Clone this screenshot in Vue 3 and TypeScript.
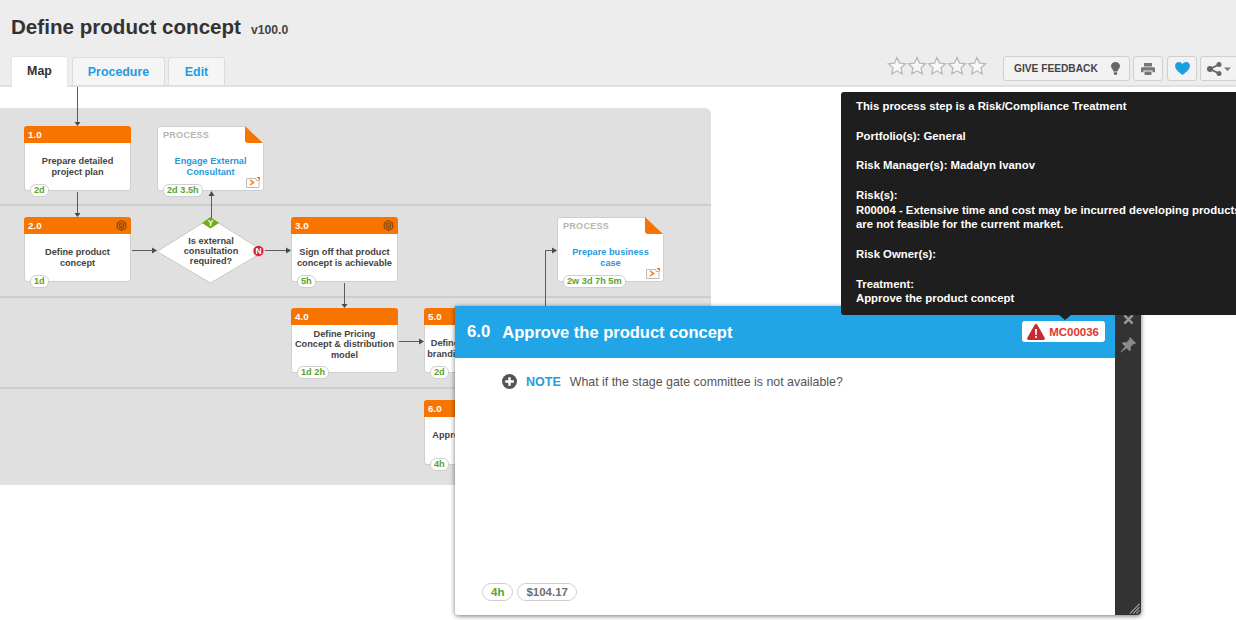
<template>
  <div class="page">
    <header class="head">
      <div class="title-row">
        <h1>Define product concept</h1>
        <span class="version">v100.0</span>
      </div>
      <div class="tab-row">
        <nav class="tabs">
          <a class="tab active">Map</a>
          <a class="tab procedure">Procedure</a>
          <a class="tab edit">Edit</a>
        </nav>
        <div class="actions">
          <div class="stars">
            <svg v-for="s in 5" :key="s" width="20" height="19" viewBox="0 0 20 19">
              <path d="M10 1.500l2.500 5.600 6 .7-4.500 4.100 1.300 6L10 14.900l-5.300 3 1.300-6L1.500 7.800l6-.7z" fill="#f7f7f7" stroke="#b9b9b9" stroke-width="1.300" />
            </svg>
          </div>
          <button class="btn feedback">
            <span>GIVE FEEDBACK</span>
            <svg width="9" height="13" viewBox="0 0 9 13">
              <path d="M4.500 0C7 0 9 1.900 9 4.300 9 6.200 7 7.200 6.500 9.500h-4C2 7.200 0 6.200 0 4.300 0 1.900 2 0 4.500 0z" fill="#666" />
              <path d="M2.800 10.200h3.400v1.300L5.300 13H3.700l-.9-1.500z" fill="#666" />
            </svg>
          </button>
          <button class="btn square print">
            <svg width="14" height="12" viewBox="0 0 14 12">
              <path d="M3 0h8v3.500H3z" fill="#777" />
              <path d="M1.300 4.200h11.400A1.300 1.300 0 0 1 14 5.500v3.700h-2.500V7.500h-9v1.700H0V5.500a1.300 1.300 0 0 1 1.300-1.300z" fill="#777" />
              <path d="M3.500 8.500h7V12h-7z" fill="#777" />
            </svg>
          </button>
          <button class="btn square">
            <svg width="15" height="13" viewBox="0 0 16 14">
              <path d="M8 14C3 10 0 7.500 0 4.200 0 1.800 1.800 0 4.100 0 5.700 0 7.200.8 8 2.100 8.800.8 10.300 0 11.900 0 14.200 0 16 1.800 16 4.200 16 7.500 13 10 8 14z" fill="#1c9fe2" />
            </svg>
          </button>
          <button class="btn share">
            <svg width="25" height="14" viewBox="0 0 25 14">
              <path d="M12 2.500L3 7l9 4.500" fill="none" stroke="#666" stroke-width="1.800" />
              <circle cx="3" cy="7" r="3" fill="#666" />
              <circle cx="12" cy="2.500" r="2.500" fill="#666" />
              <circle cx="12" cy="11.500" r="2.500" fill="#666" />
              <path d="M17 5.500h7L20.500 9z" fill="#777" />
            </svg>
          </button>
        </div>
      </div>
    </header>

    <main class="stage">
      <div class="lanes">
        <div class="lane" style="height: 96px"></div>
        <div class="lane" style="height: 90px"></div>
        <div class="lane" style="height: 89px"></div>
        <div class="lane" style="height: 96px"></div>
      </div>

      <svg class="wires" width="711" height="400" viewBox="0 0 711 400">
        <path v-for="w in wires" :key="w" :d="w" fill="none" stroke="#5c5c5c" stroke-width="1" />
        <path v-for="a in arrows" :key="a" :d="a" fill="#4a4a4a" />
      </svg>

      <div
        v-for="n in steps"
        :key="n.num + n.label"
        class="step"
        :style="{ left: n.x + 'px', top: n.y + 'px' }"
      >
        <div class="step-bar">
          <span>{{ n.num }}</span>
          <svg v-if="n.cog" width="11" height="11" viewBox="0 0 11 11">
            <path d="M5.500.8l4.200 2.400v4.600L5.500 10.200 1.300 7.800V3.200z" fill="none" stroke="#8f4c12" stroke-width="1.300" />
            <path d="M5.500 3.200l2.100 1.200v2.200L5.500 7.800 3.400 6.600V4.400z" fill="none" stroke="#8f4c12" stroke-width="1.100" />
            <path d="M1.300 3.200l4.200 2.300 4.200-2.300M5.500 5.500v4.700" fill="none" stroke="#8f4c12" stroke-width=".8" />
          </svg>
        </div>
        <div class="step-text" :class="{ tight: n.tight }">{{ n.label }}</div>
        <span class="time">{{ n.time }}</span>
      </div>

      <div
        v-for="p in processes"
        :key="p.label"
        class="process"
        :style="{ left: p.x + 'px', top: p.y + 'px' }"
      >
        <svg class="fold" width="19" height="18" viewBox="0 0 19 18">
          <path d="M0 0h19v18z" fill="#e0e0e0" />
          <path d="M0 0l18 17H3a3 3 0 0 1-3-3z" fill="#f77400" />
        </svg>
        <div class="process-tag">PROCESS</div>
        <div class="process-text">{{ p.label }}</div>
        <svg class="jump" width="14" height="11" viewBox="0 0 14 11">
          <path d="M.5 1.500h9.500v2h3v7H.5z" fill="#fff" stroke="#bbb" />
          <path d="M4 3l3.500 2.500L4 8" fill="none" stroke="#f77400" stroke-width="1.500" />
          <path d="M10.500 0H14v3.500z" fill="#f77400" />
        </svg>
        <span class="time">{{ p.time }}</span>
      </div>

      <div class="gate">
        <svg width="110" height="68" viewBox="0 0 110 68">
          <path d="M54.500 1L108 34.500 54.500 66 1 34.500z" fill="#fff" stroke="#c8c8c8" />
          <path d="M54.500 0L63 6l-8.500 5.500L46 6z" fill="#6fae10" />
          <text x="54.500" y="9" text-anchor="middle" class="gate-flag">Y</text>
          <circle cx="102.500" cy="34" r="5.500" fill="#cf2035" stroke="#f3c7cc" />
          <text x="102.500" y="37" text-anchor="middle" class="gate-flag">N</text>
        </svg>
        <div class="gate-text">Is external<br />consultation<br />required?</div>
      </div>
    </main>

    <section class="popup">
      <div class="popup-main">
        <div class="popup-head">
          <span class="popup-num">6.0</span>
          <span class="popup-title">Approve the product concept</span>
          <span class="risk">
            <svg width="18" height="16" viewBox="0 0 18 16">
              <path d="M9 0c.6 0 1 .3 1.300.8l7.400 13c.5 1-.1 2.200-1.200 2.200H1.500C.4 16-.2 14.800.3 13.800l7.400-13C8 .3 8.400 0 9 0z" fill="#c62a33" />
              <path d="M8 5h2l-.3 6H8.300z" fill="#fff" />
              <circle cx="9" cy="13" r="1.100" fill="#fff" />
            </svg>
            MC00036
          </span>
        </div>
        <div class="popup-body">
          <div class="note">
            <svg width="15" height="15" viewBox="0 0 15 15">
              <circle cx="7.500" cy="7.500" r="7.500" fill="#555" />
              <path d="M6.300 3.200h2.400v3.100h3.100v2.400H8.700v3.100H6.300V8.700H3.200V6.300h3.100z" fill="#fff" />
            </svg>
            <b>NOTE</b>
            <span>What if the stage gate committee is not available?</span>
          </div>
          <div class="chips">
            <span class="chip green">4h</span>
            <span class="chip">$104.17</span>
          </div>
        </div>
      </div>
      <aside class="popup-side">
        <svg width="11" height="11" viewBox="0 0 12 12">
          <path d="M1.500 1.500l9 9M10.500 1.500l-9 9" stroke="#999" stroke-width="2.600" />
        </svg>
        <svg class="pin" width="16" height="16" viewBox="0 0 16 16">
          <path d="M10 0l6 6-1.200 1.200-1-.4-3.200 3.200.3 3-1.300 1.300-3-3L1 15.500.5 15 5 9.400l-3-3L3.300 5.100l3 .3 3.200-3.200-.4-1z" fill="#8a8a8a" />
        </svg>
        <svg class="grip" width="11" height="11" viewBox="0 0 12 12">
          <path d="M11.500 1L1 11.500M11.500 4.500L4.500 11.500M11.500 8L8 11.500" stroke="#a5a5a5" stroke-width="1.200" />
        </svg>
      </aside>
    </section>

    <div class="tip">
      <p>This process step is a Risk/Compliance Treatment</p>
      <p>Portfolio(s): General</p>
      <p>Risk Manager(s): Madalyn Ivanov</p>
      <p>Risk(s):<br />R00004 - Extensive time and cost may be incurred developing products that<br />are not feasible for the current market.</p>
      <p>Risk Owner(s):</p>
      <p>Treatment:<br />Approve the product concept</p>
      <i class="tip-arrow"></i>
    </div>
  </div>
</template>

<script setup lang="ts">
interface Step {
  num: string;
  label: string;
  time: string;
  x: number;
  y: number;
  cog?: boolean;
  tight?: boolean;
}

interface ProcessLink {
  label: string;
  time: string;
  x: number;
  y: number;
}

const steps: Step[] = [
  { num: '1.0', label: 'Prepare detailed\nproject plan', time: '2d', x: 24, y: 39 },
  { num: '2.0', label: 'Define product\nconcept', time: '1d', x: 24, y: 130, cog: true },
  { num: '3.0', label: 'Sign off that product\nconcept is achievable', time: '5h', x: 291, y: 130, cog: true },
  { num: '4.0', label: 'Define Pricing\nConcept & distribution\nmodel', time: '1d 2h', x: 291, y: 221, tight: true },
  { num: '5.0', label: 'Define marketing and\nbranding & positioning', time: '2d', x: 424, y: 221 },
  { num: '6.0', label: 'Approve the product\nconcept', time: '4h', x: 424, y: 313 },
];

const processes: ProcessLink[] = [
  { label: 'Engage External\nConsultant', time: '2d 3.5h', x: 157, y: 39 },
  { label: 'Prepare business\ncase', time: '2w 3d 7h 5m', x: 557, y: 130 },
];

const wires = [
  'M77.500 0V36',
  'M77.500 105V127',
  'M132 163.500H152',
  'M211.500 134V108',
  'M265 163.500H286',
  'M344.500 196V218',
  'M399 254.500H419',
  'M545.500 222V163.500H552',
];

const arrows = [
  'M74.500 35h6l-3 4z',
  'M74.500 126h6l-3 4z',
  'M152 160.500v6l5-3z',
  'M208.500 109h6l-3-5z',
  'M286 160.500v6l5-3z',
  'M341.500 217h6l-3 4z',
  'M419 251.500v6l5-3z',
  'M552 160.500v6l5-3z',
];
</script>

<style>
html,
body {
  margin: 0;
  overflow: hidden;
  background: #fff;
}
</style>

<style scoped>
.page {
  position: relative;
  width: 1236px;
  height: 620px;
  overflow: hidden;
  font-family: "Liberation Sans", Arial, sans-serif;
  color: #333;
}

.head {
  height: 85px;
  background: #ededed;
  border-bottom: 2px solid #e0e0e0;
}

.title-row {
  display: flex;
  align-items: baseline;
  gap: 10px;
  padding: 14px 0 0 11px;
  height: 29px;
}

h1 {
  margin: 0;
  font-size: 20.600px;
  line-height: 26px;
  font-weight: 700;
  color: #333;
}

.version {
  font-size: 12.200px;
  font-weight: 700;
  color: #444;
}

.tab-row {
  display: flex;
  justify-content: space-between;
  height: 29px;
  margin-top: 13px;
  padding-left: 11px;
}

.tabs {
  display: flex;
  align-items: flex-end;
}

.tab {
  display: block;
  box-sizing: border-box;
  width: 57px;
  height: 28px;
  font-size: 12.400px;
  font-weight: 700;
  line-height: 28px;
  text-align: center;
  color: #1f9ce2;
  background: #f5f5f5;
  border: 1px solid #dcdcdc;
  border-bottom: 0;
  border-radius: 3px 3px 0 0;
}

.tab.procedure {
  width: 93px;
  margin: 0 3px 0 4px;
}

.tab.active {
  height: 31px;
  margin-bottom: -2px;
  color: #333;
  background: #fff;
  border-color: #e4e4e4;
}

.actions {
  display: flex;
  align-items: flex-start;
  gap: 3px;
}

.stars {
  display: flex;
  width: 100px;
  margin-right: 13px;
}

.btn {
  display: flex;
  align-items: center;
  justify-content: center;
  box-sizing: border-box;
  height: 25px;
  padding: 0;
  font-family: inherit;
  background: #f2f2f2;
  border: 1px solid #cfcfcf;
  border-radius: 3px;
}

.feedback {
  width: 127px;
  justify-content: space-between;
  padding: 0 9px 0 10px;
  font-size: 10.200px;
  font-weight: 700;
  color: #444;
}

.square {
  width: 30px;
}

.print {
  margin-right: 1px;
}

.share {
  width: 38px;
  margin-right: -2px;
  justify-content: flex-start;
  padding-left: 6px;
}

.stage {
  position: relative;
  height: 533px;
  padding-top: 21px;
  box-sizing: border-box;
}

.lanes {
  width: 711px;
  overflow: hidden;
  background: #e0e0e0;
  border-radius: 0 6px 6px 0;
}

.lane {
  border-bottom: 2px solid #cdcdcd;
}

.lane:last-child {
  border-bottom: 0;
}

.wires {
  position: absolute;
  left: 0;
  top: 0;
}

.step,
.process {
  position: absolute;
  box-sizing: border-box;
  width: 107px;
  height: 65px;
  background: #fff;
  border: 1px solid #cfcfcf;
  border-radius: 3px;
}

.step-bar {
  display: flex;
  align-items: center;
  justify-content: space-between;
  height: 17px;
  margin: -1px -1px 0;
  padding: 0 4px;
  font-size: 9.800px;
  font-weight: 700;
  color: #fff;
  background: #f77400;
  border-radius: 3px 3px 0 0;
}

.step-text {
  display: flex;
  align-items: center;
  justify-content: center;
  box-sizing: border-box;
  height: 48px;
  font-size: 9.200px;
  font-weight: 700;
  line-height: 11px;
  text-align: center;
  white-space: pre-line;
  color: #444;
}

.step-text.tight {
  height: 39px;
  line-height: 10.500px;
}

.time {
  position: absolute;
  left: 5px;
  bottom: -7px;
  padding: 0 3px;
  font-size: 9.200px;
  font-weight: 700;
  line-height: 11px;
  color: #5da32c;
  background: #fff;
  border: 1px solid #cfcfcf;
  border-radius: 6px;
}

.fold {
  position: absolute;
  right: -1px;
  top: -1px;
}

.process-tag {
  height: 17px;
  padding-left: 5px;
  font-size: 9px;
  font-weight: 700;
  line-height: 17px;
  letter-spacing: 0.3px;
  color: #b5b5b5;
}

.process-text {
  display: flex;
  align-items: center;
  justify-content: center;
  height: 46px;
  font-size: 9.200px;
  font-weight: 700;
  line-height: 11px;
  text-align: center;
  white-space: pre-line;
  color: #2a98dc;
}

.jump {
  position: absolute;
  right: 3px;
  bottom: 2px;
}

.gate {
  position: absolute;
  left: 156px;
  top: 130px;
  width: 110px;
  height: 68px;
}

.gate svg {
  display: block;
}

.gate-flag {
  font-size: 8.500px;
  font-weight: 700;
  fill: #fff;
}

.gate-text {
  position: absolute;
  left: 0;
  right: 0;
  top: 19px;
  font-size: 9.200px;
  font-weight: 700;
  line-height: 10px;
  text-align: center;
  color: #444;
}

.popup {
  position: absolute;
  left: 455px;
  top: 306px;
  display: flex;
  width: 686px;
  height: 309px;
  box-shadow: 0 1px 5px rgba(0, 0, 0, 0.55);
  border-radius: 0 0 4px 4px;
}

.popup-main {
  flex: 1;
  display: flex;
  flex-direction: column;
  background: #fff;
  border-radius: 0 0 0 4px;
}

.popup-head {
  display: flex;
  align-items: center;
  height: 52px;
  padding: 0 10px 0 12px;
  color: #fff;
  background: #22a5e6;
}

.popup-num {
  margin-right: 12px;
  font-size: 16.800px;
  font-weight: 700;
}

.popup-title {
  flex: 1;
  font-size: 16.500px;
  font-weight: 700;
}

.risk {
  display: flex;
  align-items: center;
  gap: 4px;
  box-sizing: border-box;
  height: 21px;
  margin-top: -1px;
  padding: 0 6px 0 5px;
  font-size: 11.500px;
  font-weight: 700;
  color: #e3342f;
  background: #fff;
  border-radius: 3px;
}

.popup-body {
  flex: 1;
  display: flex;
  flex-direction: column;
  justify-content: space-between;
  padding: 16px 27px 14px 47px;
}

.note {
  display: flex;
  align-items: center;
  gap: 9px;
  font-size: 12.380px;
  color: #555;
}

.note b {
  font-size: 12.500px;
  color: #1f9ce2;
}

.chips {
  display: flex;
  gap: 4px;
  margin-left: -20px;
}

.chip {
  padding: 0 8px;
  font-size: 11.500px;
  font-weight: 700;
  line-height: 16px;
  color: #6f6f6f;
  background: #fff;
  border: 1px solid #cfcfcf;
  border-radius: 9px;
}

.chip.green {
  color: #5da32c;
}

.popup-side {
  position: relative;
  display: flex;
  flex-direction: column;
  align-items: center;
  box-sizing: border-box;
  width: 26px;
  padding-top: 8px;
  background: #333;
  border-radius: 0 0 4px 0;
}

.pin {
  margin-top: 12px;
}

.grip {
  position: absolute;
  right: 1px;
  bottom: 1px;
}

.tip {
  position: absolute;
  left: 841px;
  top: 92px;
  box-sizing: border-box;
  width: 440px;
  height: 223px;
  padding: 7px 15px;
  font-size: 11.350px;
  font-weight: 700;
  line-height: 14.800px;
  white-space: nowrap;
  color: #fff;
  background: #1e1e1e;
  border-radius: 3px;
}

.tip p {
  margin: 0 0 14.800px;
}

.tip-arrow {
  position: absolute;
  left: 218px;
  bottom: -5px;
  width: 0;
  height: 0;
  border-left: 6px solid transparent;
  border-right: 6px solid transparent;
  border-top: 5px solid #1e1e1e;
}
</style>
